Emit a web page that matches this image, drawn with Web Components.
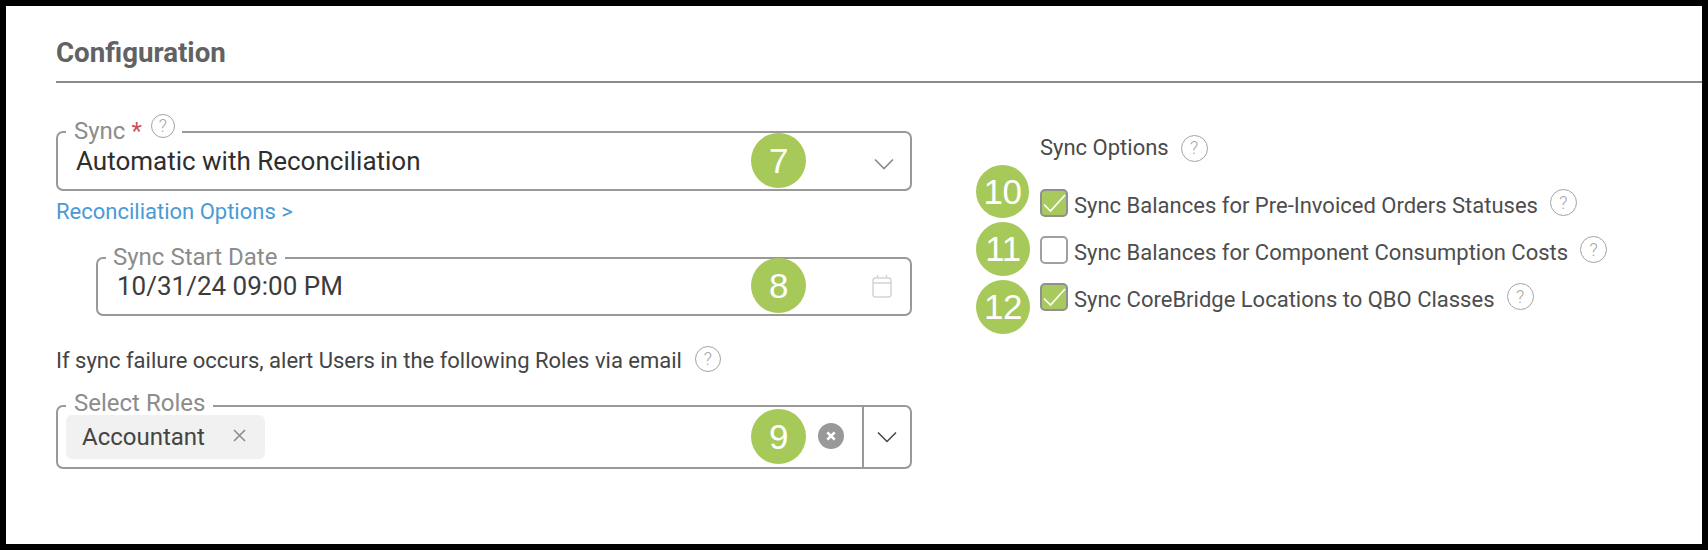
<!DOCTYPE html>
<html><head><meta charset="utf-8">
<style>
html,body{margin:0;padding:0;background:#000}
body{font-family:Roboto,"Liberation Sans",sans-serif}
</style></head>
<body>
<config-frame>
  <config-title>Configuration</config-title>
  <config-columns>
    <config-stack slot="left">
      <out-field>
        <span slot="label">Sync<span style="color:#c9505a;margin-left:6px;font-size:24px;line-height:20px">*</span><help-mark size="24" style="margin-left:9px;vertical-align:7px;margin-top:-10px"></help-mark></span>
        <span class="v">Automatic with Reconciliation</span>
        <svg slot="end" width="20" height="12" viewBox="0 0 20 12" fill="none" stroke="#8a8a8a" stroke-width="1.6"><path d="M1 1.5l9 9 9-9"/></svg>
      </out-field>
      <link-line>Reconciliation Options &gt;</link-line>
      <out-field indent>
        <span slot="label">Sync Start Date</span>
        <span class="v">10/31/24 09:00 PM</span>
        <svg slot="end" width="20" height="23" viewBox="0 0 20 23" fill="none" stroke="#d4d4d4" stroke-width="1.5"><rect x="1" y="3" width="18" height="19" rx="2.5"/><path d="M1 8h18M5.5 0v3M14.5 0v3"/></svg>
      </out-field>
      <help-text>If sync failure occurs, alert Users in the following Roles via email<help-mark size="26" style="margin:-5px 0 0 13px"></help-mark></help-text>
      <role-field>
        <span slot="label">Select Roles</span>
        <role-chip>Accountant</role-chip>
      </role-field>
    </config-stack>
    <config-options slot="right">
      <options-head>Sync Options<help-mark size="27" style="margin-left:12px"></help-mark></options-head>
      <check-row checked>Sync Balances for Pre-Invoiced Orders Statuses</check-row>
      <check-row>Sync Balances for Component Consumption Costs</check-row>
      <check-row checked>Sync CoreBridge Locations to QBO Classes</check-row>
    </config-options>
  </config-columns>
  <num-badge x="773" y="155" d="55">7</num-badge>
  <num-badge x="773" y="280" d="55">8</num-badge>
  <num-badge x="773" y="431" d="55">9</num-badge>
  <num-badge x="997" y="186" d="53">10</num-badge>
  <num-badge x="997" y="243" d="54">11</num-badge>
  <num-badge x="997" y="301" d="54">12</num-badge>
</config-frame>
<script>
function def(name,css,html,extra){
  customElements.define(name,class extends HTMLElement{
    constructor(){super();const r=this.attachShadow({mode:'open'});r.innerHTML='<style>'+css+'</style>'+html;}
    connectedCallback(){if(extra)extra.call(this,this.shadowRoot);}
  });
}
def('config-frame',`:host{display:block;position:relative;box-sizing:border-box;height:538px;margin:6px;background:#fff;overflow:hidden}`,`<slot></slot>`);
def('config-title',`:host{display:block;box-sizing:border-box;height:77px;margin-left:50px;padding-top:29px;border-bottom:2px solid #8a8a8a;font:700 27.7px/36px Roboto,sans-serif;color:#626262}`,`<slot></slot>`);
def('config-columns',`:host{display:grid;grid-template-columns:856px 1fr;column-gap:129px;padding:37px 0 0 50px}`,`<slot name="left"></slot><slot name="right"></slot>`);
def('config-stack',`:host{display:flex;flex-direction:column;min-width:0}`,`<slot></slot>`);
def('out-field',`:host{display:block;font-family:Roboto,sans-serif}
 :host([indent]){margin:22px 0 0 40px}
 fieldset{box-sizing:border-box;height:71px;margin:0;padding:0;border:2px solid #999;border-radius:7px;min-width:0}
 :host([indent]) fieldset{height:70px}
 legend{margin-left:8px;padding:0 7px 0 8px;height:24px;font:400 24px/22px Roboto,sans-serif;color:#8c8c8c;white-space:nowrap}
 :host([indent]) legend{padding:0 8px 0 7px}
 .row{display:flex;align-items:center;height:34px;padding-left:18px;font:400 26px/34px Roboto,sans-serif;color:#2e2e2e}
 :host([indent]) .row{color:#3c3c3c;margin-top:-1px;padding-left:19px}
 .end{margin-left:auto;margin-right:16px;display:flex;align-items:center}
 ::slotted(svg){display:block;margin-top:5px}
 :host([indent]) .end{margin-right:18px;margin-top:-4px}`,
 `<fieldset><legend><slot name="label"></slot></legend><div class="row"><span><slot></slot></span><span class="end"><slot name="end"></slot></span></div></fieldset>`);
def('link-line',`:host{display:block;margin-top:9px;font:400 22px/24px Roboto,sans-serif;color:#4a9ad6}`,`<slot></slot>`);
def('help-text',`:host{display:flex;align-items:center;margin-top:33px;margin-bottom:-1px;height:24px;font:400 22px/24px Roboto,sans-serif;color:#444}`,`<slot></slot>`);
def('role-field',`:host{display:block;margin-top:22px}
 fieldset{box-sizing:border-box;height:75px;margin:0;padding:0;border:2px solid #999;border-radius:7px;min-width:0}
 legend{margin-left:8px;padding:0 8px 0 8px;height:24px;font:400 24px/18px Roboto,sans-serif;color:#8c8c8c;white-space:nowrap}
 .row{display:flex;height:60px;margin-top:-11px}
 .chips{flex:1;padding:8px 0 0 8px}
 .x{align-self:center;width:26px;height:26px;margin:-2px 18px 0 0}
 .tog{width:48px;border-left:2px solid #999;display:flex;align-items:center;justify-content:center;box-sizing:border-box}`,
 `<fieldset><legend><slot name="label"></slot></legend><div class="row"><div class="chips"><slot></slot></div>
 <svg class="x" viewBox="0 0 26 26"><circle cx="13" cy="13" r="13" fill="#999"/><path d="M9.3 9.3l7.4 7.4M16.7 9.3l-7.4 7.4" stroke="#fff" stroke-width="2.6"/></svg>
 <div class="tog"><svg width="20" height="12" viewBox="0 0 20 12" fill="none" stroke="#444" stroke-width="1.5"><path d="M1 1.5l9 9 9-9"/></svg></div></div></fieldset>`);
def('role-chip',`:host{display:inline-flex;align-items:center;box-sizing:border-box;width:199px;height:44px;padding:0 19px 0 16px;background:#f1f1f1;border-radius:6px;font:400 24px/44px Roboto,sans-serif;color:#444;justify-content:space-between}`,
 `<slot></slot><svg width="13" height="13" viewBox="0 0 13 13" stroke="#8c8c8c" stroke-width="1.6" style="margin-top:-3px"><path d="M1 1l11 11M12 1L1 12"/></svg>`);
def('help-mark',`:host{display:inline-flex;align-items:center;justify-content:center;box-sizing:border-box;border:1.5px solid #a3a3a3;border-radius:50%;color:#a3a3a3;font:300 18px/1 Roboto,sans-serif;flex:none}`,`?`,
 function(r){const s=+this.getAttribute('size')||27;this.style.width=this.style.height=s+'px';});
def('config-options',`:host{display:block;margin-top:12px}`,`<slot></slot>`);
def('options-head',`:host{display:flex;align-items:center;height:32px;font:400 22px/32px Roboto,sans-serif;color:#4a4a4a;margin-left:-1px;margin-bottom:15px}`,`<slot></slot>`);
def('check-row',`:host{display:flex;align-items:center;height:47px;margin-left:-1px;font:400 22px/28px Roboto,sans-serif;color:#4d4d4d}
 .box{box-sizing:border-box;width:28px;height:28px;border:2px solid #a0a0a0;border-radius:5px;margin-right:6px;flex:none;display:flex}
 :host([checked]) .box{background:#a8c95d;border-color:#909090}
 .box svg{display:none}
 :host([checked]) .box svg{display:block}
 .t{margin-top:7px}
 help-mark{margin:0 0 0 12px}`,
 `<span class="box"><svg width="24" height="24" viewBox="0 0 24 24" fill="none" stroke="#fff" stroke-width="1.7"><path d="M2 13.5l6.5 6.5L23 4"/></svg></span><span class="t"><slot></slot></span><help-mark size="27"></help-mark>`);
def('num-badge',`:host{position:absolute;display:flex;align-items:center;justify-content:center;border-radius:50%;background:#a6c95a;color:#fff;font-family:"Liberation Sans",Arial,sans-serif;font-size:35px;letter-spacing:-.5px}`,`<slot></slot>`,
 function(){const d=+this.getAttribute('d');this.style.left=(+this.getAttribute('x')-Math.round(d/2))+'px';this.style.top=(+this.getAttribute('y')-Math.round(d/2))+'px';this.style.width=this.style.height=d+'px';});
</script>
</body></html>
